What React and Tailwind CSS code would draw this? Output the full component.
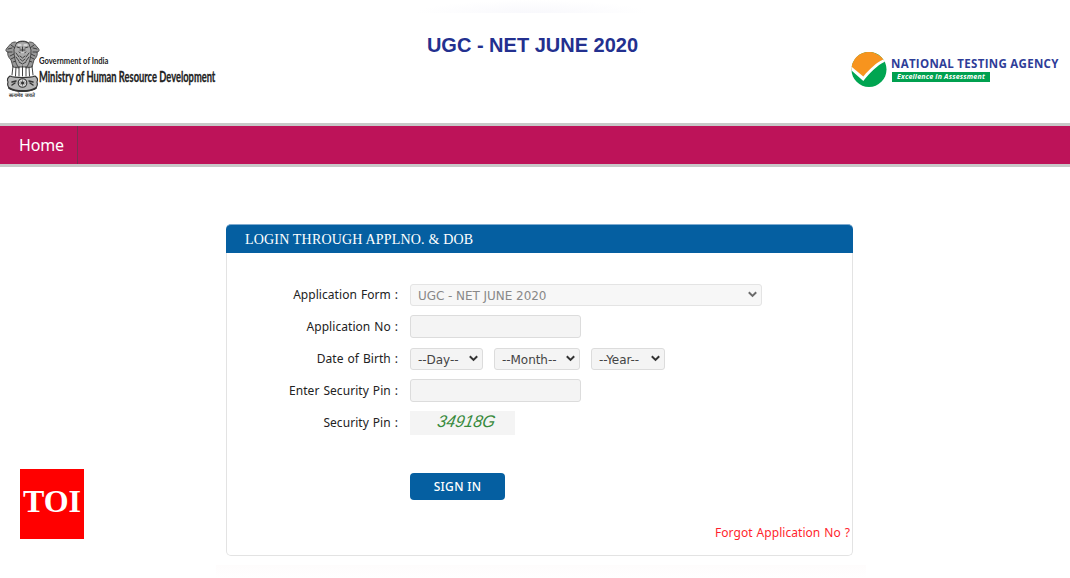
import { useState } from 'react';

const Emblem = () => (
  <svg className="block w-[35px] h-[52px]" viewBox="0 0 35 52" fill="none" stroke="#333" strokeLinecap="round">
    {/* side lions */}
    <path d="M10 2C6 2 5 5 2 8c-2 2-1 4 1 4-1 3 1 6 3 8l2 7 6 1V5z" fill="#999" strokeWidth=".8" />
    <path d="M25 2c4 0 5 3 8 6 2 2 1 4-1 4 1 3-1 6-3 8l-2 7-6 1V5z" fill="#999" strokeWidth=".8" />
    <path d="M3 9l4-1M3 12h4M6 5l4 3M5 16l4-2M6 19l4-2M8 22l3-1M32 9l-4-1M32 12h-4M29 5l-4 3M30 16l-4-2M29 19l-4-2M27 22l-3-1" strokeWidth=".9" />
    {/* front lion */}
    <path d="M11 4c1-4 12-4 13 0l2 6c0 6-1 12-4 17h-9C10 22 9 16 9 10z" fill="#aaa" strokeWidth=".8" />
    <path d="M12 3c2-2 9-2 11 0M12 7l3 1M23 7l-3 1M14 12c2 2 5 2 7 0M15 10h5M17.500 7v4M11 13l3 4M24 13l-3 4M11 17l3 4M24 17l-3 4M15 16l2.500 2 2.500-2M15 19l2.500 2 2.500-2M14 22l3.500 2 3.500-2" strokeWidth=".9" />
    <path d="M13 5h3M19 5h3M16 13h3" stroke="#fff" strokeWidth="1.200" />
    {/* legs */}
    <path d="M8 26l-1 9M11 27l-.5 9M14 27v9M17.500 26v10M21 27v9M24 27l.5 9M27 26l1 9" stroke="#444" strokeWidth="1" />
    {/* abacus with the wheel */}
    <path d="M5 36c5 2 20 2 25 0 3 2 3 4 2 6 1 3 0 5-2 7-6 3-19 3-25 0-2-2-3-4-2-7-1-2-1-4 2-6z" fill="#b5b5b5" strokeWidth="1.100" />
    <circle cx="17.500" cy="43" r="4.300" fill="#ddd" strokeWidth="1.100" />
    <circle cx="17.500" cy="43" r="1" fill="#333" />
    <path d="M17.500 40v6M14.500 43h6M15.500 41l4 4M19.500 41l-4 4" strokeWidth=".5" />
    <path d="M7 42l4-1M7 45l3-2M28 42l-4-1M28 45l-3-2" strokeWidth="1.500" />
    <path d="M4 48c7 4 20 4 27 0" strokeWidth="1.800" />
  </svg>
);

const NtaLogo = () => (
  <svg className="block w-9 h-9 shrink-0" viewBox="0 0 36 36">
    <circle cx="18" cy="17.500" r="17.500" fill="#00a551" />
    <path d="M.4 18A17.500 17.500 0 0 1 32.500 7.800C26 11 19 17.500 12 25.500L3.500 17.500z" fill="#f7941e" />
    <path d="M.3 14.500L12.300 24.500C19 16.500 25.500 10.500 32.300 7.500l1.500 2.200C26 13.500 19.500 20 12.300 29L.5 18.500z" fill="#fff" />
  </svg>
);

const Header = () => (
  <header className="h-[123px] flex">
    <div className="flex w-[415px] pt-10 pl-[5px]">
      <div className="w-[34px] shrink-0">
        <Emblem />
        <div className="text-[5px] leading-[7px] text-center whitespace-nowrap text-[#333] font-bold">सत्यमेव जयते</div>
      </div>
      <div className="pt-[13px] text-[#222] font-['Lato',sans-serif] font-bold whitespace-nowrap">
        <div className="text-[10px] leading-[15px] origin-left scale-x-[0.760]">Government of India</div>
        <div className="text-[16px] leading-[15px] origin-left scale-x-[0.583] [-webkit-text-stroke:0.3px_#222]">Ministry of Human Resource Development</div>
      </div>
    </div>
    <div className="w-[235px]">
      <div className="h-[13px] bg-radial-[at_50%_100%] from-[#f8f8fc] to-white to-70%" />
      <h1 className="pt-[20px] text-center text-[20px] leading-6 font-bold text-[#23308f] font-['Liberation_Sans',sans-serif] whitespace-nowrap">UGC - NET JUNE 2020</h1>
    </div>
    <div className="flex w-[219px] pt-[52px] gap-[4px] ml-auto">
      <NtaLogo />
      <div className="pt-[5px]">
        <div className="text-[11.5px] leading-[14px] font-bold text-[#2e3d98] font-['Open_Sans',sans-serif] whitespace-nowrap tracking-[0.3px]">NATIONAL TESTING AGENCY</div>
        <div className="mt-[1px] ml-[1px] h-[10px] w-[98px] bg-[#00a04f] text-white text-[7px] leading-[10px] font-bold italic text-center font-['Open_Sans',sans-serif] whitespace-nowrap tracking-[0.2px]">Excellence in Assessment</div>
      </div>
    </div>
  </header>
);

const Row = ({ label, children, className }) => (
  <div className={`flex items-center ${className}`}>
    <label className="w-[171px] text-right text-[12px] leading-4 text-[#222] whitespace-nowrap font-['Noto_Sans',sans-serif] tracking-[0.05px] [word-spacing:0.8px]">{label} :</label>
    <div className="flex ml-[12px]">{children}</div>
  </div>
);

const Select = ({ children, className, disabled }) => (
  <div className={`relative ${className}`}>
    <select
      disabled={disabled}
      className="block appearance-none w-full h-[22px] rounded-[3px] border border-[#dcdcdc] bg-[#f4f4f4] pl-[7px] pt-px text-[12px] tracking-[-0.05px] text-[#444] disabled:text-[#888] disabled:bg-[#f7f7f7] disabled:border-[#e4e4e4]"
    >
      <option>{children}</option>
    </select>
    <svg className={`absolute right-[5px] top-[7px] w-[9px] h-[7px] pointer-events-none ${disabled ? 'text-[#6b6b6b]' : 'text-[#333]'}`} viewBox="0 0 9 7" fill="none" stroke="currentColor" strokeWidth="2">
      <path d="M.8 1.200l3.700 3.700 3.700-3.700" />
    </svg>
  </div>
);

const inputClass = "w-[171px] h-[23px] rounded-[3px] border border-[#dcdcdc] bg-[#f4f4f4] px-2 text-[12px] outline-none";

const LoginForm = () => {
  const [applicationNo, setApplicationNo] = useState('');
  const [pin, setPin] = useState('');

  return (
    <form
      onSubmit={(e) => e.preventDefault()}
      className="w-[627px] h-[332px] ml-[226px] mt-[57px] flex flex-col"
    >
      <h2 className="h-[29px] shrink-0 rounded-t-[5px] border-t border-[#7fabd0] bg-[#055fa1] pl-[19px] text-[14px] leading-[29px] text-white font-['Liberation_Serif',serif] tracking-[0.180px]">LOGIN THROUGH APPLNO. &amp; DOB</h2>
      <div className="flex-1 flex flex-col rounded-b-[5px] border border-t-0 border-[#e3e3e3]">
        <Row label="Application Form" className="mt-[31px] h-[22px]">
          <Select disabled className="w-[352px]">UGC - NET JUNE 2020</Select>
        </Row>
        <Row label="Application No" className="mt-[9px] h-[23px]">
          <input className={inputClass} value={applicationNo} onChange={(e) => setApplicationNo(e.target.value)} />
        </Row>
        <Row label="Date of Birth" className="mt-[10px] h-[22px]">
          <Select className="w-[73px]">--Day--</Select>
          <Select className="w-[86px] ml-[11px]">--Month--</Select>
          <Select className="w-[74px] ml-[11px]">--Year--</Select>
        </Row>
        <Row label="Enter Security Pin" className="mt-[9px] h-[23px]">
          <input className={inputClass} value={pin} onChange={(e) => setPin(e.target.value)} />
        </Row>
        <Row label="Security Pin" className="mt-[9px] h-[24px]">
          <div className="w-[105px] h-[24px] bg-[#f4f4f4] pl-[7px] text-center text-[17px] leading-[22px] italic text-[#388a3d] font-['Liberation_Sans',sans-serif]">
            <span className="inline-block -skew-x-12 scale-x-95">34918G</span>
          </div>
        </Row>
        <button type="submit" className="mt-[38px] ml-[183px] w-[95px] h-[27px] shrink-0 rounded-[4px] bg-[#055fa1] text-white text-[12px] font-medium font-['Noto_Sans',sans-serif] tracking-[0.3px]">SIGN IN</button>
        <a href="#" className="mt-[25px] mr-[2px] self-end text-[12px] leading-4 text-[#ff1f2d] font-['Noto_Sans',sans-serif] tracking-[0.05px] [word-spacing:0.8px]">Forgot Application No ?</a>
      </div>
    </form>
  );
};

export default function App() {
  return (
    <div className="relative w-[1070px] h-[578px] overflow-hidden bg-white font-['DejaVu_Sans',sans-serif]">
      <Header />
      <nav className="h-11 border-y-[3px] border-[#c8c8c8] bg-[#bd1359]">
        <a href="#" className="flex items-center w-[78px] h-full pl-[19px] border-r border-r-[#7d2d50] text-white text-[16px] tracking-[-0.2px] font-['Noto_Sans',sans-serif]">Home</a>
      </nav>
      <LoginForm />
      <div className="mt-[9px] ml-[216px] w-[650px] h-[13px] bg-linear-to-b from-[#fefcfc] to-white" />
      {/* publisher badge */}
      <div className="absolute left-5 top-[469px] w-16 h-[70px] bg-[#ff0000] text-white text-center text-[32px] leading-[65px] font-bold font-['Liberation_Serif',serif]">TOI</div>
    </div>
  );
}
